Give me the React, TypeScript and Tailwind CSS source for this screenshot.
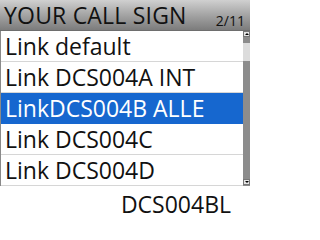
import React from "react";

const rows = [
  "Link default",
  "Link DCS004A INT",
  "LinkDCS004B ALLE",
  "Link DCS004C",
  "Link DCS004D",
];

const App = () => {
  return (
    <div
      className="w-[250px] h-[219px] bg-white overflow-hidden"
      style={{ fontFamily: '"Open Sans", "Noto Sans", sans-serif' }}
    >
      {/* Title bar */}
      <div className="h-[31px] flex items-end justify-between pl-[4px] pr-[5px] bg-gradient-to-b from-[#d0d0d0] via-[#a4a4a4] to-[#7c7c7c] border-b border-[#6e6e6e]">
        <span className="text-[23px] leading-[29px] text-[#111] tracking-[0.2px]">YOUR CALL SIGN</span>
        <span className="text-[14px] leading-[16px] text-[#111] mb-[1px]">2/11</span>
      </div>

      {/* List + scrollbar */}
      <div className="flex h-[155px] border-l border-b border-[#8a8a8a]">
        <div className="flex-1 flex flex-col">
          {rows.map((r, i) => (
            <div
              key={r}
              className={
                i === 2
                  ? "h-[31px] flex items-center pl-[4px] text-[23px] text-white bg-[#1667cf] border-b border-[#1667cf]"
                  : "h-[31px] flex items-center pl-[4px] text-[23px] text-[#111] border-b border-[#d6d6d6]"
              }
            >
              {r}
            </div>
          ))}
        </div>
        <div className="w-[7px] bg-[#8c8c8c] flex flex-col items-center">
          <div className="w-[7px] h-[6px] bg-[#e4e4e4] border border-[#777] flex items-center justify-center">
            <div className="w-0 h-0 border-l-[2px] border-r-[2px] border-b-[2px] border-l-transparent border-r-transparent border-b-black" />
          </div>
          <div className="mt-[6px] w-[7px] h-[18px] bg-[#dcdcdc]" />
          <div className="flex-1" />
          <div className="w-[7px] h-[6px] bg-[#e4e4e4] border border-[#777] flex items-center justify-center">
            <div className="w-0 h-0 border-l-[2px] border-r-[2px] border-t-[2px] border-l-transparent border-r-transparent border-t-black" />
          </div>
        </div>
      </div>

      {/* Current value */}
      <div className="flex justify-end pr-[19px] pt-[7px]">
        <span className="text-[23px] leading-[22px] text-[#111]">DCS004BL</span>
      </div>
    </div>
  );
};

export default App;
